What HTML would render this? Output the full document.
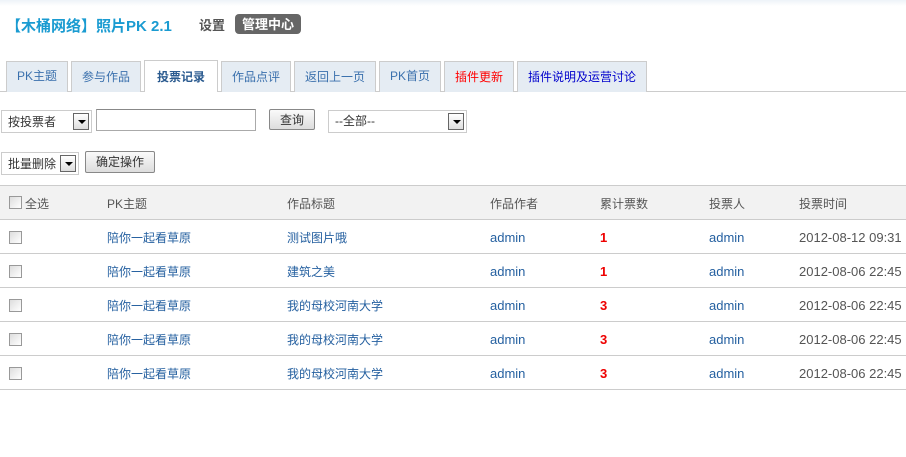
<!DOCTYPE html>
<html><head><meta charset="utf-8"><style>
*{margin:0;padding:0;box-sizing:border-box}
body{width:906px;height:457px;overflow:hidden;background:#fff;font-family:"Liberation Sans","Noto Sans CJK SC",sans-serif;font-size:12px;color:#444;position:relative}
.k{font-family:"Noto Sans CJK SC",sans-serif}
.abs{position:absolute;white-space:nowrap}
.topbar{position:absolute;left:0;top:0;width:906px;height:6px;background:linear-gradient(#eef3f8,#fff)}
.title{left:6px;top:15px;font-size:15px;font-weight:bold;color:#1a9bd1}
.set{left:199px;top:15px;font-size:13px;line-height:20px;font-weight:bold;color:#555}
.mgr{left:235px;top:14px;width:66px;height:20px;background:#666;color:#fff;border-radius:4px;font-size:13px;font-weight:bold;text-align:center;line-height:20px}
.tabline{left:0;top:91px;width:906px;height:1px;background:#ccc}
.tab{position:absolute;top:61px;height:31px;background:#e5ecf3;border:1px solid #ccc;border-bottom:none;color:#3a70ad;font-size:12px;text-align:center;line-height:29px}
.tab.k{line-height:30px}
.tab.on{top:60px;height:32px;background:#fff;font-weight:bold;color:#2a5a8f;line-height:31px}
.sel{position:absolute;border:1px solid #ccc;background:#fff;height:23px;font-size:12px;line-height:22px;padding-left:6px;color:#333}
.sel i{position:absolute;right:2px;top:2px;width:16px;height:17px;border:1px solid #666;background:linear-gradient(#fff,#ddd)}
.sel i:after{content:"";position:absolute;left:4px;top:6px;border-left:4px solid transparent;border-right:4px solid transparent;border-top:4px solid #000}
.btn{position:absolute;border:1px solid #888;border-radius:2px;background:linear-gradient(#fafafa,#ddd);font-size:12px;text-align:center;color:#333}
.inp{position:absolute;border:1px solid #aaa;border-top-color:#888;background:#fff}
.thead{left:0;top:185px;width:906px;height:35px;background:#f2f2f2;border-top:1px solid #ccc;border-bottom:1px solid #ccc}
.row{position:absolute;left:0;width:906px;height:34px;border-bottom:1px solid #ccc}
.c{position:absolute;top:10px;font-size:13px;line-height:16px;white-space:nowrap}
.c.k{font-size:12px;top:10px}
.cb{position:absolute;left:9px;top:11px;width:13px;height:13px;border:1px solid #999;background:linear-gradient(135deg,#ddd,#fff)}
.lk{color:#2560a0}
.num{color:#e00;font-weight:bold}
.t{color:#555}
</style></head><body>
<div class="topbar"></div>
<div class="abs title">【木桶网络】照片PK 2.1</div>
<div class="abs set k">设置</div>
<div class="abs mgr k">管理中心</div>
<div class="abs tabline"></div>
<div class="tab" style="left:6px;width:62px">PK主题</div>
<div class="tab k" style="left:71px;width:70px">参与作品</div>
<div class="tab on k" style="left:144px;width:74px">投票记录</div>
<div class="tab k" style="left:221px;width:70px">作品点评</div>
<div class="tab k" style="left:294px;width:82px">返回上一页</div>
<div class="tab" style="left:379px;width:62px">PK首页</div>
<div class="tab k" style="left:444px;width:70px;color:#f00">插件更新</div>
<div class="tab k" style="left:517px;width:130px;color:#00c">插件说明及运营讨论</div>

<div class="sel k" style="left:1px;top:110px;width:91px">按投票者<i></i></div>
<div class="inp" style="left:96px;top:109px;width:160px;height:22px"></div>
<div class="btn k" style="left:269px;top:109px;width:46px;height:21px;line-height:19px">查询</div>
<div class="sel" style="left:328px;top:110px;width:139px;line-height:21px">--全部--<i></i></div>

<div class="sel k" style="left:1px;top:152px;width:78px">批量删除<i></i></div>
<div class="btn k" style="left:85px;top:151px;width:70px;height:22px;line-height:20px">确定操作</div>

<div class="abs thead">
<div class="cb" style="top:10px"></div>
<div class="c t k" style="left:25px">全选</div>
<div class="c t" style="left:107px;font-size:12px">PK主题</div>
<div class="c t k" style="left:287px">作品标题</div>
<div class="c t k" style="left:490px">作品作者</div>
<div class="c t k" style="left:600px">累计票数</div>
<div class="c t k" style="left:709px">投票人</div>
<div class="c t k" style="left:799px">投票时间</div>
</div>

<div class="row" style="top:220px"><div class="cb"></div><div class="c lk k" style="left:107px">陪你一起看草原</div><div class="c lk k" style="left:287px">测试图片哦</div><div class="c lk" style="left:490px">admin</div><div class="c num" style="left:600px">1</div><div class="c lk" style="left:709px">admin</div><div class="c t" style="left:799px">2012-08-12 09:31</div></div>
<div class="row" style="top:254px"><div class="cb"></div><div class="c lk k" style="left:107px">陪你一起看草原</div><div class="c lk k" style="left:287px">建筑之美</div><div class="c lk" style="left:490px">admin</div><div class="c num" style="left:600px">1</div><div class="c lk" style="left:709px">admin</div><div class="c t" style="left:799px">2012-08-06 22:45</div></div>
<div class="row" style="top:288px"><div class="cb"></div><div class="c lk k" style="left:107px">陪你一起看草原</div><div class="c lk k" style="left:287px">我的母校河南大学</div><div class="c lk" style="left:490px">admin</div><div class="c num" style="left:600px">3</div><div class="c lk" style="left:709px">admin</div><div class="c t" style="left:799px">2012-08-06 22:45</div></div>
<div class="row" style="top:322px"><div class="cb"></div><div class="c lk k" style="left:107px">陪你一起看草原</div><div class="c lk k" style="left:287px">我的母校河南大学</div><div class="c lk" style="left:490px">admin</div><div class="c num" style="left:600px">3</div><div class="c lk" style="left:709px">admin</div><div class="c t" style="left:799px">2012-08-06 22:45</div></div>
<div class="row" style="top:356px"><div class="cb"></div><div class="c lk k" style="left:107px">陪你一起看草原</div><div class="c lk k" style="left:287px">我的母校河南大学</div><div class="c lk" style="left:490px">admin</div><div class="c num" style="left:600px">3</div><div class="c lk" style="left:709px">admin</div><div class="c t" style="left:799px">2012-08-06 22:45</div></div>
</body></html>
